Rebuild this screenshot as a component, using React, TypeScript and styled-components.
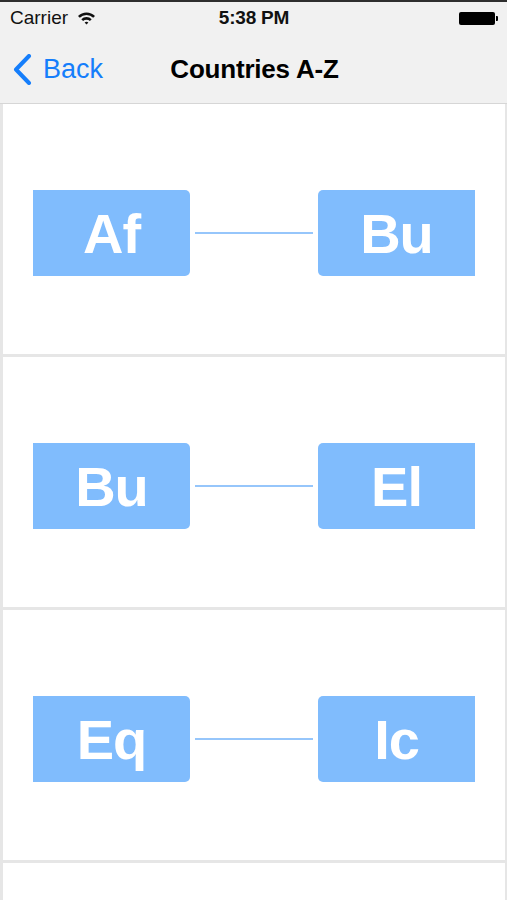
import React from 'react';
import styled, { createGlobalStyle } from 'styled-components';

const GlobalStyle = createGlobalStyle`
  html, body {
    margin: 0;
    padding: 0;
    height: 900px;
    overflow: hidden;
    background: #e7e7e7;
    font-family: "Liberation Sans", Arial, sans-serif;
  }
`;

const Screen = styled.div`
  width: 507px;
  height: 900px;
  display: flex;
  flex-direction: column;
  border-top: 2px solid #2e2e2e;
  box-sizing: border-box;
  overflow: hidden;
`;

const Header = styled.div`
  background: #f1f1f1;
  border-bottom: 1px solid #d6d6d6;
  display: flex;
  flex-direction: column;
`;

const StatusBar = styled.div`
  height: 31px;
  display: grid;
  grid-template-columns: 1fr auto 1fr;
  align-items: center;
  padding: 1px 9px 0 10px;
  box-sizing: border-box;
  color: #111;
  font-size: 19px;
`;

const Carrier = styled.div`
  display: flex;
  align-items: center;
  gap: 9px;
`;

const Time = styled.div`
  font-weight: bold;
  letter-spacing: -0.2px;
`;

const BatteryWrap = styled.div`
  justify-self: end;
  display: flex;
  align-items: center;
`;

const BatteryBody = styled.div`
  width: 36px;
  height: 13px;
  background: #000;
  border-radius: 2px;
`;

const BatteryNub = styled.div`
  width: 2px;
  height: 5px;
  background: #000;
  border-radius: 0 1px 1px 0;
  margin-left: 1px;
`;

const NavBar = styled.div`
  height: 70px;
  position: relative;
  display: flex;
  align-items: center;
  justify-content: center;
  padding-top: 3px;
  box-sizing: border-box;
`;

const BackButton = styled.div`
  position: absolute;
  left: 13px;
  top: 3px;
  bottom: 0;
  display: flex;
  align-items: center;
  gap: 11px;
  color: #157efb;
  font-size: 27px;
`;

const Title = styled.div`
  font-size: 26px;
  font-weight: bold;
  color: #000;
  letter-spacing: -0.2px;
  margin-left: 2px;
`;

const List = styled.div`
  flex: 1;
  display: flex;
  flex-direction: column;
  gap: 3px;
  padding: 0 2px 0 3px;
  background: #e6e6e6;
`;

const Cell = styled.div`
  flex: 0 0 250px;
  background: #fff;
  display: flex;
  align-items: center;
  padding: 8px 30px 0;
  box-sizing: border-box;
`;

const Box = styled.div<{ $side: 'left' | 'right' }>`
  width: 157px;
  height: 86px;
  flex: 0 0 157px;
  background: #80bcfd;
  color: #fff;
  font-weight: bold;
  font-size: 56px;
  display: flex;
  align-items: center;
  justify-content: center;
  border-radius: ${({ $side }) => ($side === 'left' ? '0 5px 5px 0' : '5px 0 0 5px')};
  letter-spacing: -1px;
`;

const Link = styled.div`
  flex: 1;
  height: 2px;
  margin: 0 5px;
  background: #96c6fb;
`;

const pairs = [
  ['Af', 'Bu'],
  ['Bu', 'El'],
  ['Eq', 'Ic'],
  ['', ''],
];

const Wifi = () => (
  <svg width="19" height="14" viewBox="0 0 19 14">
    <path d="M1 5 A12 12 0 0 1 18 5 L16.2 6.8 A9.5 9.5 0 0 0 2.8 6.8 Z" fill="#111" />
    <path d="M4.3 8.3 A7.3 7.3 0 0 1 14.7 8.3 L12.9 10.1 A4.8 4.8 0 0 0 6.1 10.1 Z" fill="#111" />
    <path d="M7.6 11.6 A2.7 2.7 0 0 1 11.4 11.6 L9.5 13.5 Z" fill="#111" />
  </svg>
);

const Chevron = () => (
  <svg width="19" height="31" viewBox="0 0 19 31">
    <path d="M16 2 L3 15.5 L16 29" fill="none" stroke="#157efb" strokeWidth="4" strokeLinecap="round" strokeLinejoin="round" />
  </svg>
);

const App = () => {
  return (
    <>
      <GlobalStyle />
      <Screen>
        <Header>
          <StatusBar>
            <Carrier>
              Carrier
              <Wifi />
            </Carrier>
            <Time>5:38 PM</Time>
            <BatteryWrap>
              <BatteryBody />
              <BatteryNub />
            </BatteryWrap>
          </StatusBar>
          <NavBar>
            <BackButton>
              <Chevron />
              Back
            </BackButton>
            <Title>Countries A-Z</Title>
          </NavBar>
        </Header>
        <List>
          {pairs.map(([from, to], i) => (
            <Cell key={i}>
              {from ? (
                <>
                  <Box $side="left">{from}</Box>
                  <Link />
                  <Box $side="right">{to}</Box>
                </>
              ) : null}
            </Cell>
          ))}
        </List>
      </Screen>
    </>
  );
};

export default App;
